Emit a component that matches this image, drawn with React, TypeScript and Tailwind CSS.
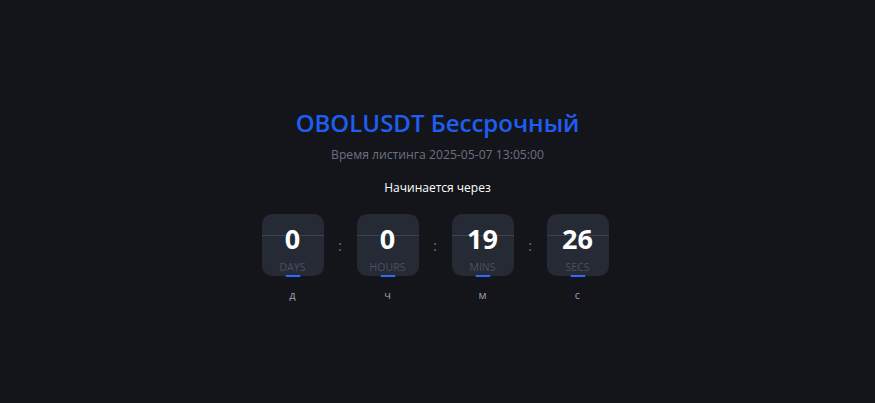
const UNITS = [
  { value: '0', en: 'DAYS', ru: 'д' },
  { value: '0', en: 'HOURS', ru: 'ч' },
  { value: '19', en: 'MINS', ru: 'м' },
  { value: '26', en: 'SECS', ru: 'с' },
];

function FlipBox({ value, en }: { value: string; en: string }) {
  return (
    <div className="relative w-[62px] h-[62px] rounded-[10px] bg-[#252a35] flex flex-col items-center">
      <div className="absolute left-0 right-0 top-[21px] h-px bg-[#3b4252]" />
      <span className="relative mt-[9px] text-[27px] leading-[32px] font-bold text-white">{value}</span>
      <span className="mt-[6px] text-[10.5px] leading-[12px] text-[#4a5162]">{en}</span>
      <div className="absolute bottom-[-1px] left-1/2 -translate-x-1/2 w-[15px] h-[2px] rounded-full bg-[#2f6bff]" />
    </div>
  );
}

export default function App() {
  return (
    <div
      className="w-full h-[403px] bg-[#13151b] flex flex-col items-center pt-[108px]"
      style={{ fontFamily: '"Open Sans", "Noto Sans", sans-serif' }}
    >
      <h1 className="text-[24px] leading-[30px] font-semibold text-[#1f5ef2]">OBOLUSDT Бессрочный</h1>
      <p className="mt-[8px] text-[12.2px] leading-[18px] text-[#6b7180]">Время листинга 2025-05-07 13:05:00</p>
      <p className="mt-[15px] text-[12px] leading-[18px] text-white">Начинается через</p>
      <div className="mt-[17px] mr-[5px] flex items-start">
        {UNITS.map((u, i) => (
          <div key={u.en} className="flex items-start">
            <div className="flex flex-col items-center">
              <FlipBox value={u.value} en={u.en} />
              <span className="mt-[11px] text-[11px] leading-[16px] text-[#9aa0ab]">{u.ru}</span>
            </div>
            {i < UNITS.length - 1 && (
              <div className="w-[33px] h-[62px] flex items-center justify-center text-[14px] text-[#6b7180]">:</div>
            )}
          </div>
        ))}
      </div>
    </div>
  );
}
